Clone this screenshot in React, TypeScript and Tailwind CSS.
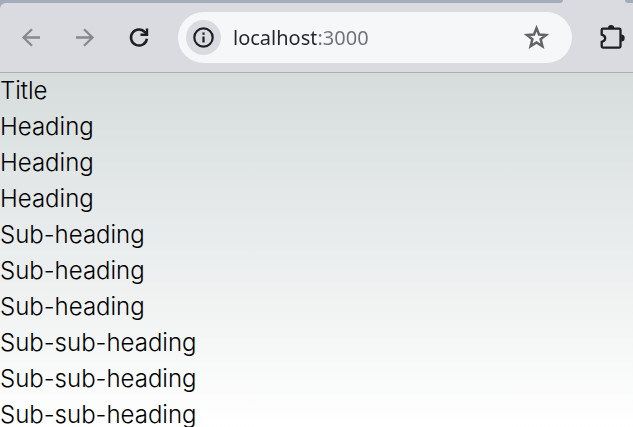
const lines = [
  'Title',
  'Heading',
  'Heading',
  'Heading',
  'Sub-heading',
  'Sub-heading',
  'Sub-heading',
  'Sub-sub-heading',
  'Sub-sub-heading',
  'Sub-sub-heading',
];

const navButton = 'flex h-[51px] w-[54px] shrink-0 items-center justify-center';

function TabStrip() {
  return (
    <div className="flex h-[3px] bg-[#dadbe0]">
      <div className="flex-1 rounded-br-[6px] bg-[#a5acb9]" />
      <div className="w-[62px]" />
      <div className="w-2 rounded-bl-[6px] bg-[#a5acb9]" />
    </div>
  );
}

function Toolbar() {
  return (
    <div className="bg-[#a5acb9]">
      <div className="flex items-center rounded-tl-[6px] border-b border-[#abafb4] bg-[#dadbe0] py-[9px] pr-[3px] pl-1">
        <button type="button" aria-label="Back" className={navButton}>
          <svg width="24" height="24" viewBox="0 0 24 24" fill="none" stroke="#88898e" strokeWidth="2.300">
            <path d="M21 11.500H4.500M13 3.200l-8.500 8.300 8.500 8.300" />
          </svg>
        </button>
        <button type="button" aria-label="Forward" className={navButton}>
          <svg width="24" height="24" viewBox="0 0 24 24" fill="none" stroke="#88898e" strokeWidth="2.300">
            <path d="M3 11.500h16.500M11 3.200l8.500 8.300-8.500 8.300" />
          </svg>
        </button>
        <button type="button" aria-label="Reload" className={navButton}>
          <svg width="24" height="24" viewBox="0 0 24 24" fill="none" stroke="#1e1f22" strokeWidth="2.500">
            <path d="M19.900 12.700A8 8 0 1 1 18.200 6.500L20 8.500" />
            <path d="M20 2.500v7M21.200 8.700H13.500" strokeWidth="2.400" />
          </svg>
        </button>
        <div className="ml-3 flex h-[51px] min-w-0 flex-1 items-center rounded-full bg-[#f6f7f9] pr-5 pl-2">
          <button
            type="button"
            aria-label="View site information"
            className="flex size-[35px] shrink-0 items-center justify-center rounded-full bg-[#dadbe0]"
          >
            <svg width="21" height="21" viewBox="0 0 21 21" fill="none" stroke="#1e1f22">
              <circle cx="10.500" cy="10.500" r="9.200" strokeWidth="2.200" />
              <path d="M10.500 9.500v6M10.500 5.500v2.200" strokeWidth="2.200" />
            </svg>
          </button>
          <input
            type="text"
            aria-label="Address"
            defaultValue="localhost:3000"
            className="ml-3 h-9 min-w-0 flex-1 bg-[linear-gradient(to_right,#24252a_83px,#707175_83px)] bg-clip-text font-['Noto_Sans',sans-serif] text-[20px] leading-9 text-transparent caret-black outline-none"
          />
          <button
            type="button"
            aria-label="Bookmark this tab"
            className="flex size-[31px] shrink-0 items-center justify-center"
          >
            <svg width="27" height="27" viewBox="0 0 27 27" fill="none" stroke="#636466" strokeWidth="2.500">
              <path d="m13.500 4.100 2.500 6.400 7 .5-5.400 4.300 1.800 6.900-5.900-3.800-5.900 3.800 1.800-6.900L4 11l7-.5z" />
            </svg>
          </button>
        </div>
        <button
          type="button"
          aria-label="Extensions"
          className="ml-[22px] flex size-9 shrink-0 items-center justify-center"
        >
          <svg width="28" height="28" viewBox="0 0 28 28" fill="none" stroke="#1e1f22" strokeWidth="2.300">
            <path d="M6 4.700h15.200q1.300 0 1.300 1.300v16.300q0 1.300-1.300 1.300H5q-1.300 0-1.300-1.300v-4.500q3.500-.8 3.500-3.600T3.700 10.600V6q0-1.300 1.300-1.300z" />
            <path d="M10 4a3.100 3.100 0 0 1 6.200 0zM23.200 10.600a3.500 3.500 0 0 1 0 7z" fill="#1e1f22" stroke="none" />
          </svg>
        </button>
      </div>
    </div>
  );
}

export default function App() {
  return (
    <div className="flex h-screen flex-col overflow-hidden">
      <header className="shrink-0">
        <TabStrip />
        <Toolbar />
      </header>
      <main className="min-h-0 flex-1 overflow-hidden bg-linear-to-b from-[#d6dcdc] to-white font-['Inter',sans-serif] text-2xl leading-9 font-light text-black">
        {lines.map((line, index) => (
          <p key={index}>{line}</p>
        ))}
      </main>
    </div>
  );
}
